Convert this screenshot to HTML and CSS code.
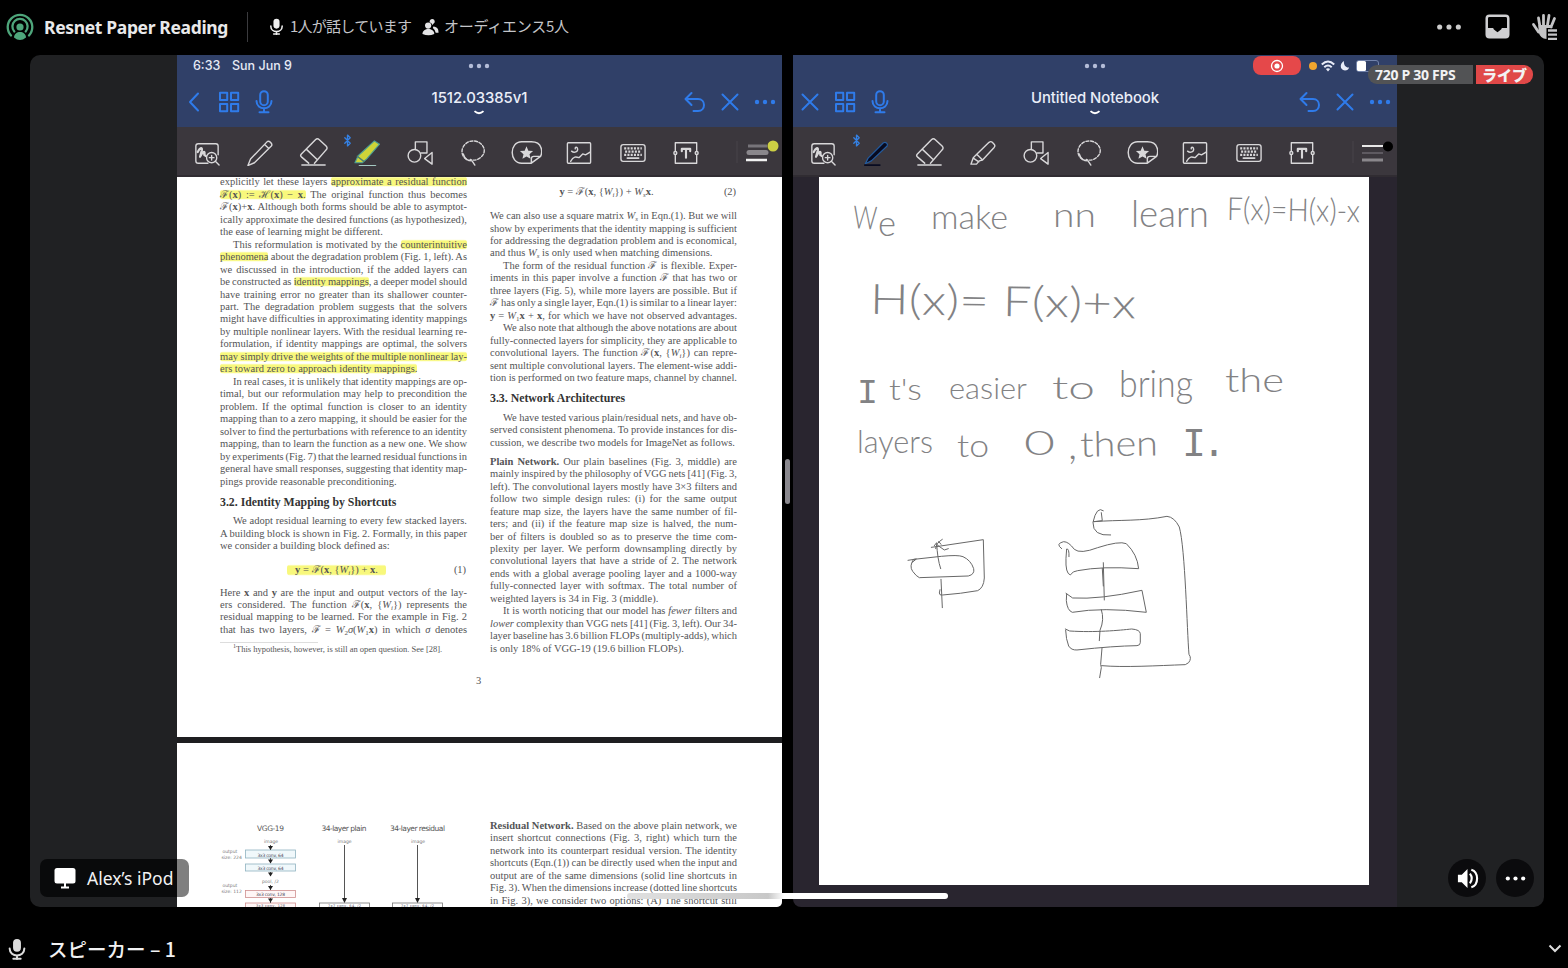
FILE: index.html
```html
<!DOCTYPE html>
<html lang="ja">
<head>
<meta charset="utf-8">
<title>Resnet Paper Reading</title>
<link rel="stylesheet" href="styles.css">
</head>
<body>
<svg class="defs" width="0" height="0">
  <symbol id="mic" viewBox="0 0 24 24"><rect x="7.7" y="1" width="8.6" height="14" rx="4.3" fill="currentColor"/><path d="M4 11.5c0 10 16 10 16 0M12 19v4M8 22.6h8" fill="none" stroke="currentColor" stroke-width="2.2" stroke-linecap="round"/></symbol>
  <symbol id="micline" viewBox="0 0 24 24"><rect x="8.2" y="1.2" width="7.6" height="14" rx="3.8"/><path d="M4.5 11c0 9.600 15 9.600 15 0M12 18.300v4M7.500 22.300h9"/></symbol>
  <symbol id="grid" viewBox="0 0 24 24"><path d="M3 2.800h7.200v7.200H3zM14 2.800h7.200v7.200H14zM3 14h7.200v7.200H3zM14 14h7.200v7.200H14z"/></symbol>
  <symbol id="cross" viewBox="0 0 24 24"><path d="M4.500 4.500l15 15M19.500 4.500l-15 15"/></symbol>
  <symbol id="back" viewBox="0 0 24 24"><path d="M16 3.500L8 12l8 8.500"/></symbol>
  <symbol id="undo" viewBox="0 0 24 24"><path d="M8.500 3L2.500 9l6 6M2.500 9h12.500c8 0 8 12 0 12h-4.500"/></symbol>
  <symbol id="dots" viewBox="0 0 24 24"><g fill="currentColor" stroke="none"><circle cx="4" cy="12" r="2.200"/><circle cx="12" cy="12" r="2.200"/><circle cx="20" cy="12" r="2.200"/></g></symbol>
  <symbol id="zoomnote" viewBox="0 0 28 28"><path d="M15 25H4.500Q2 25 2 22.500v-16Q2 4 4.500 4h19Q26 4 26 6.500V16"/><path d="M4 13c2-4 5-6 4.500-2L6.500 18c3-6 6-7 4.500-2l1.500 1" stroke-width="2.400"/><circle cx="19" cy="19" r="5.500"/><path d="M23 23l4 4M16.500 19h5M19 16.500v5"/></symbol>
  <symbol id="pen" viewBox="0 0 28 28"><path d="M1 27.500l2.800-7L21.500 2c2-2 6.700 2 4.700 4.500L8 24.500zM19 4.800l4.500 4.400"/></symbol>
  <symbol id="penfill" viewBox="0 0 28 28"><path d="M2.500 25.500l3-6L22 3c2.500-1.500 5.200 1 4 3.500L9 22.500z" fill="#080b20" stroke="#245b9e" stroke-width="1.300"/><path d="M2 27h16" stroke="#080b20" stroke-width="2"/></symbol>
  <symbol id="eraser" viewBox="0 0 32 32"><path d="M11 27L3.500 20.500Q2 19 3.500 17.500L18 2.800q2-1.800 4 0l7 6.500q2 2 0 4L17 27M8.500 12.500L20 23.500M4 29h24"/></symbol>
  <symbol id="marker" viewBox="0 0 28 28"><path d="M1 26l2.500-7L7 15.500 20.500 2.500q2-1.500 3.500 0l2 2q1.500 1.500 0 3.500L13.500 21.500 10 22.500 7 26zM7.500 15.500l5.500 5.500M3.500 19.500l6 4"/></symbol>
  <symbol id="markerfill" viewBox="0 0 28 28"><path d="M1 24.500L4.500 17 22 1l5.500 3.500L14 20l-5 4.500z" fill="#cdd438" stroke="#4c9e94" stroke-width="1.200"/><path d="M3.500 17.500l7 5.500" stroke="#4a7f74"/><path d="M6 27.800h17" stroke="#a5c9c2" stroke-width="2"/></symbol>
  <symbol id="shapes" viewBox="0 0 28 28"><path d="M9 10V2h12.500v12H15M19 20l8-6.500V26z"/><circle cx="8" cy="17" r="6.800"/></symbol>
  <symbol id="lasso" viewBox="0 0 28 28"><path d="M7 21C-3 14 4 1 14 1s17 11 8 18q-5 4-11 2" stroke-dasharray="3.200 1.800"/><path d="M3.500 15c1.500 5 5 7.500 9.500 7.500l3 4.500"/></symbol>
  <symbol id="sticker" viewBox="0 0 32 28"><path d="M21 25H11C-2 25-2 3 11 3h10c12 0 11.500 11 9.500 15zM21 25v-4.500q0-2.500 2.500-2.500H30"/><path d="M16 7.500l1.900 4.600 4.900.4-3.700 3.200 1.100 4.800-4.200-2.500-4.200 2.500 1.100-4.800-3.700-3.200 4.900-.4z" fill="currentColor" stroke="none"/></symbol>
  <symbol id="image" viewBox="0 0 28 28"><rect x="1.500" y="3" width="25" height="22" rx="1"/><path d="M5 23c3-6 6-5 9-4l4-4 3 1 5-3M6 12c3 2.500 7 .500 6.500-2.500C12 7 9.500 7.500 10 9.500"/></symbol>
  <symbol id="keyboard" viewBox="0 0 28 28"><rect x="1" y="5" width="26" height="18" rx="2.500"/><path d="M4.500 9h19M5.500 12.500h17M4.500 16h19" stroke-width="2.200" stroke-linecap="butt" stroke-dasharray="2.200 1.300"/><path d="M8 19.500h12" stroke-width="2"/></symbol>
  <symbol id="textbox" viewBox="0 0 28 28"><rect x="2.500" y="3" width="23" height="22"/><path d="M9.500 12V9.500h9V12M14 9.500v9.500" stroke-width="2.300"/><circle cx="2.500" cy="14" r="1.600" fill="#3b373d"/><circle cx="25.500" cy="14" r="1.600" fill="#3b373d"/></symbol>
  <symbol id="bt" viewBox="0 0 10 14"><path d="M2 4l6 6-3 3V1l3 3-6 6"/></symbol>
</svg>

<header class="topbar">
  <svg class="stage-icon" viewBox="0 0 28 28"><g fill="none" stroke="#4ea67b" stroke-width="2.300" stroke-linecap="round"><path d="M5 22.500a12.300 12.300 0 1 1 18 0"/><path d="M8.300 18.500a7.600 7.600 0 1 1 11.400 0"/></g><circle cx="14" cy="14" r="3.600" fill="#4ea67b"/><path d="M8 24.500c0-7.500 12-7.500 12 0q-6 5-12 0z" fill="#4ea67b"/></svg>
  <h1 class="channel">Resnet Paper Reading</h1>
  <span class="rule"></span>
  <svg class="mini-mic"><use href="#mic"/></svg>
  <span class="count speakers">1人が話しています</span>
  <svg class="people" viewBox="0 0 18 20"><g fill="#e4e4e6"><circle cx="6.500" cy="9" r="3.300"/><path d="M.5 18c0-7 12.500-7 12.500 0q-6 2.500-12.500 0z"/><path d="M8 5.500c0-5 6-4.500 5.500 0l-2.500 3q-.5-2.500-3-3zM12 10c4.500.5 5.500 3 5.500 6.500h-3q-.5-3-3-5z"/></g></svg>
  <span class="count audience">オーディエンス5人</span>
  <div class="top-actions">
    <svg class="more"><use href="#dots"/></svg>
    <svg class="inbox" viewBox="0 0 26 26"><rect x="1.800" y="1.800" width="22.400" height="22.400" rx="2.800" fill="none" stroke="#cfcfd1" stroke-width="2.600"/><path d="M2 14.500h6.500c.5 2 2 2 4.500 4.500 2.500-2.500 4-2.500 4.500-4.500H24V24H2z" fill="#cfcfd1"/></svg>
    <svg class="hand" viewBox="0 0 28 28"><path d="M9 14L7.500 5M12.500 12V2.500M16.500 12l1.500-9.500M20 14l3.500-8.500M7.500 19L2.500 11.500" stroke="#c4c4c6" stroke-width="2.800" stroke-linecap="round"/><path d="M7.500 12h13l1 3h-6v11q-6 0-8-7z" fill="#c4c4c6"/><path d="M17 17.500h9M17 21.700h9M17 25.900h9" stroke="#c4c4c6" stroke-width="2.300"/></svg>
  </div>
</header>

<main class="stream">
  <div class="ipad">
    <section class="pane">
      <header class="nav">
        <div class="status"><span class="time">6:33</span><span>Sun Jun 9</span></div>
        <svg class="grab"><use href="#dots"/></svg>
        <div class="nav-row">
          <div class="nav-side"><svg><use href="#back"/></svg><svg><use href="#grid"/></svg><svg><use href="#micline"/></svg></div>
          <div class="doc-title">1512.03385v1<svg class="chev" viewBox="0 0 12 5"><path d="M1.500 1.200q4.500 4.200 9 0"/></svg></div>
          <div class="nav-side right"><svg><use href="#undo"/></svg><svg><use href="#cross"/></svg><svg><use href="#dots"/></svg></div>
        </div>
      </header>
      <div class="tools">
        <svg><use href="#zoomnote"/></svg><svg><use href="#pen"/></svg><svg class="big"><use href="#eraser"/></svg>
        <span class="active"><svg class="btooth"><use href="#bt"/></svg><svg><use href="#markerfill"/></svg></span>
        <svg><use href="#shapes"/></svg><svg><use href="#lasso"/></svg><svg class="big"><use href="#sticker"/></svg><svg><use href="#image"/></svg><svg><use href="#keyboard"/></svg><svg><use href="#textbox"/></svg>
        <svg class="stroke-size" viewBox="0 0 40 40"><path d="M2 8v22" stroke="#49454b" stroke-width="1"/><path d="M13 13h19" stroke="#77747a" stroke-width="3"/><path d="M14 19.500h17" stroke="#8a878c" stroke-width="5" stroke-linecap="round"/><path d="M11 27h21" stroke="#f2f2f2" stroke-width="2.600"/><circle cx="38" cy="13" r="5.500" fill="#cdd044" stroke="none"/></svg>
      </div>
      <div class="paper">
        <article class="page one">
          <div class="col left">
            <p class="l">explicitly let these layers <mark>approximate a residual function</mark></p>
            <p class="l"><mark>ℱ(<b>x</b>) := ℋ(<b>x</b>) − <b>x</b>.</mark> The original function thus becomes</p>
            <p class="l">ℱ(<b>x</b>)+<b>x</b>. Although both forms should be able to asymptot-</p>
            <p class="l">ically approximate the desired functions (as hypothesized),</p>
            <p class="l end">the ease of learning might be different.</p>
            <p class="l in">This reformulation is motivated by the <mark>counterintuitive</mark></p>
            <p class="l"><mark>phenomena</mark> about the degradation problem (Fig. 1, left). As</p>
            <p class="l">we discussed in the introduction, if the added layers can</p>
            <p class="l">be constructed as <mark>identity mappings</mark>, a deeper model should</p>
            <p class="l">have training error no greater than its shallower counter-</p>
            <p class="l">part. The degradation problem suggests that the solvers</p>
            <p class="l">might have difficulties in approximating identity mappings</p>
            <p class="l">by multiple nonlinear layers. With the residual learning re-</p>
            <p class="l">formulation, if identity mappings are optimal, the solvers</p>
            <p class="l"><mark>may simply drive the weights of the multiple nonlinear lay-</mark></p>
            <p class="l end"><mark>ers toward zero to approach identity mappings.</mark></p>
            <p class="l in">In real cases, it is unlikely that identity mappings are op-</p>
            <p class="l">timal, but our reformulation may help to precondition the</p>
            <p class="l">problem. If the optimal function is closer to an identity</p>
            <p class="l">mapping than to a zero mapping, it should be easier for the</p>
            <p class="l">solver to find the perturbations with reference to an identity</p>
            <p class="l">mapping, than to learn the function as a new one. We show</p>
            <p class="l">by experiments (Fig. 7) that the learned residual functions in</p>
            <p class="l">general have small responses, suggesting that identity map-</p>
            <p class="l end">pings provide reasonable preconditioning.</p>
            <h2>3.2. Identity Mapping by Shortcuts</h2>
            <p class="l in">We adopt residual learning to every few stacked layers.</p>
            <p class="l">A building block is shown in Fig. 2. Formally, in this paper</p>
            <p class="l end">we consider a building block defined as:</p>
            <div class="eq"><mark><b>y</b> = ℱ(<b>x</b>, {<i>W<sub>i</sub></i>}) + <b>x</b>.</mark><span>(1)</span></div>
            <p class="l">Here <b>x</b> and <b>y</b> are the input and output vectors of the lay-</p>
            <p class="l">ers considered. The function ℱ(<b>x</b>, {<i>W<sub>i</sub></i>}) represents the</p>
            <p class="l">residual mapping to be learned. For the example in Fig. 2</p>
            <p class="l">that has two layers, ℱ = <i>W</i><sub>2</sub><i>σ</i>(<i>W</i><sub>1</sub><b>x</b>) in which <i>σ</i> denotes</p>
            <p class="footnote"><sup>1</sup>This hypothesis, however, is still an open question. See [28].</p>
          </div>
          <div class="col right">
            <div class="eq first"><span><b>y</b> = ℱ(<b>x</b>, {<i>W<sub>i</sub></i>}) + <i>W<sub>s</sub></i><b>x</b>.</span><span>(2)</span></div>
            <p class="l">We can also use a square matrix <i>W<sub>s</sub></i> in Eqn.(1). But we will</p>
            <p class="l">show by experiments that the identity mapping is sufficient</p>
            <p class="l">for addressing the degradation problem and is economical,</p>
            <p class="l end">and thus <i>W<sub>s</sub></i> is only used when matching dimensions.</p>
            <p class="l in">The form of the residual function ℱ is flexible. Exper-</p>
            <p class="l">iments in this paper involve a function ℱ that has two or</p>
            <p class="l">three layers (Fig. 5), while more layers are possible. But if</p>
            <p class="l">ℱ has only a single layer, Eqn.(1) is similar to a linear layer:</p>
            <p class="l"><b>y</b> = <i>W</i><sub>1</sub><b>x</b> + <b>x</b>, for which we have not observed advantages.</p>
            <p class="l in">We also note that although the above notations are about</p>
            <p class="l">fully-connected layers for simplicity, they are applicable to</p>
            <p class="l">convolutional layers. The function ℱ(<b>x</b>, {<i>W<sub>i</sub></i>}) can repre-</p>
            <p class="l">sent multiple convolutional layers. The element-wise addi-</p>
            <p class="l">tion is performed on two feature maps, channel by channel.</p>
            <h2>3.3. Network Architectures</h2>
            <p class="l in">We have tested various plain/residual nets, and have ob-</p>
            <p class="l">served consistent phenomena. To provide instances for dis-</p>
            <p class="l end">cussion, we describe two models for ImageNet as follows.</p>
            <p class="l top"><b>Plain Network.</b> Our plain baselines (Fig. 3, middle) are</p>
            <p class="l">mainly inspired by the philosophy of VGG nets [41] (Fig. 3,</p>
            <p class="l">left). The convolutional layers mostly have 3×3 filters and</p>
            <p class="l">follow two simple design rules: (i) for the same output</p>
            <p class="l">feature map size, the layers have the same number of fil-</p>
            <p class="l">ters; and (ii) if the feature map size is halved, the num-</p>
            <p class="l">ber of filters is doubled so as to preserve the time com-</p>
            <p class="l">plexity per layer. We perform downsampling directly by</p>
            <p class="l">convolutional layers that have a stride of 2. The network</p>
            <p class="l">ends with a global average pooling layer and a 1000-way</p>
            <p class="l">fully-connected layer with softmax. The total number of</p>
            <p class="l end">weighted layers is 34 in Fig. 3 (middle).</p>
            <p class="l in">It is worth noticing that our model has <i>fewer</i> filters and</p>
            <p class="l"><i>lower</i> complexity than VGG nets [41] (Fig. 3, left). Our 34-</p>
            <p class="l">layer baseline has 3.6 billion FLOPs (multiply-adds), which</p>
            <p class="l end">is only 18% of VGG-19 (19.6 billion FLOPs).</p>
          </div>
          <div class="folio">3</div>
        </article>
        <article class="page two">
          <svg class="figure" viewBox="177 743 300 164">
            <g class="cap"><text x="257" y="831" textLength="27">VGG-19</text><text x="321.500" y="831" textLength="45">34-layer plain</text><text x="390" y="831" textLength="55">34-layer residual</text></g>
            <g class="tiny"><text x="264" y="843">image</text><text x="337.500" y="843">image</text><text x="411" y="843">image</text><text x="222.500" y="853">output</text><text x="221.500" y="859">size: 224</text><text x="222.500" y="887">output</text><text x="221.500" y="893">size: 112</text><text x="262" y="883">pool, /2</text></g>
            <g fill="#f0f8fb" stroke="#8fb2c0" stroke-width=".8"><rect x="245.500" y="850" width="50" height="8"/><rect x="245.500" y="864" width="50" height="7"/></g>
            <g fill="#fff6f6" stroke="#cf8f8f" stroke-width=".8"><rect x="245.500" y="890.500" width="50" height="7"/><rect x="245.500" y="903" width="50" height="7"/></g>
            <g fill="none" stroke="#777" stroke-width=".8"><rect x="319.500" y="903" width="50" height="7"/><rect x="392.500" y="903" width="50" height="7"/></g>
            <g class="tiny dark"><text x="257.500" y="856.500" textLength="26">3x3 conv, 64</text><text x="257.500" y="870" textLength="26">3x3 conv, 64</text><text x="256" y="896.300" textLength="29">3x3 conv, 128</text></g>
            <g class="tiny dark edge"><text x="256" y="906.500" textLength="29">3x3 conv, 128</text><text x="328" y="906.500" textLength="33">7x7 conv, 64, /2</text><text x="401" y="906.500" textLength="33">7x7 conv, 64, /2</text></g>
            <path d="M344.500 845v57M417.500 845v57M270.500 845v5M270.500 858v5M270.500 872v4M270.500 885v5M270.500 898v5" stroke="#555"/>
            <path d="M342 898h5l-2.500 5zM415 898h5l-2.500 5zM268 846h5l-2.500 4zM268 859.500h5l-2.500 4zM268 872.500h5l-2.500 4zM268 886h5l-2.500 4zM268 898.500h5l-2.500 4z" fill="#222"/>
          </svg>
          <div class="col residual">
            <p class="l"><b>Residual Network.</b> Based on the above plain network, we</p>
            <p class="l">insert shortcut connections (Fig. 3, right) which turn the</p>
            <p class="l">network into its counterpart residual version. The identity</p>
            <p class="l">shortcuts (Eqn.(1)) can be directly used when the input and</p>
            <p class="l">output are of the same dimensions (solid line shortcuts in</p>
            <p class="l">Fig. 3). When the dimensions increase (dotted line shortcuts</p>
            <p class="l">in Fig. 3), we consider two options: (A) The shortcut still</p>
          </div>
        </article>
      </div>
    </section>
    <div class="split"><span></span></div>
    <section class="pane notes">
      <header class="nav">
        <div class="status end-status">
          <span class="rec"><svg viewBox="0 0 14 14"><circle cx="7" cy="7" r="5.500" fill="none" stroke="#fff" stroke-width="1.300"/><circle cx="7" cy="7" r="2.600" fill="#fff"/></svg></span>
          <i class="orange"></i>
          <svg class="wifi" viewBox="0 0 14 12"><g fill="none" stroke="#e8ecf8" stroke-width="2"><path d="M.8 4.500q6.200-6 12.400 0M3.300 7.300q3.700-3.600 7.400 0"/></g><path d="M4.900 9L7 11.500 9.100 9Q7 7.300 4.900 9z" fill="#e8ecf8"/></svg>
          <svg class="moon" viewBox="0 0 10 12"><path d="M4 1C-1 3-1 11.500 5 11.500q3.500 0 4.500-3.300C6 9 3 5 4 1z" fill="#e8ecf8"/></svg>
          <svg class="battery" viewBox="0 0 26 12"><rect x=".5" y=".5" width="22" height="11" rx="2.500" fill="none" stroke="#7283ab"/><rect x="1" y="1" width="9" height="10" rx="1.500" fill="#fff"/></svg>
        </div>
        <svg class="grab"><use href="#dots"/></svg>
        <div class="nav-row">
          <div class="nav-side"><svg><use href="#cross"/></svg><svg><use href="#grid"/></svg><svg><use href="#micline"/></svg></div>
          <div class="doc-title">Untitled Notebook<svg class="chev" viewBox="0 0 12 5"><path d="M1.500 1.200q4.500 4.200 9 0"/></svg></div>
          <div class="nav-side right"><svg><use href="#undo"/></svg><svg><use href="#cross"/></svg><svg><use href="#dots"/></svg></div>
        </div>
      </header>
      <div class="tools">
        <svg><use href="#zoomnote"/></svg>
        <span class="active"><svg class="btooth"><use href="#bt"/></svg><svg><use href="#penfill"/></svg></span>
        <svg class="big"><use href="#eraser"/></svg><svg><use href="#marker"/></svg><svg><use href="#shapes"/></svg><svg><use href="#lasso"/></svg><svg class="big"><use href="#sticker"/></svg><svg><use href="#image"/></svg><svg><use href="#keyboard"/></svg><svg><use href="#textbox"/></svg>
        <svg class="stroke-size" viewBox="0 0 40 40"><path d="M2 8v22" stroke="#49454b" stroke-width="1"/><path d="M11 13h21" stroke="#e8e8e8" stroke-width="2"/><path d="M11 20h21" stroke="#5e5a61" stroke-width="2"/><path d="M11 27h21" stroke="#8a878c" stroke-width="3"/><circle cx="37" cy="13.500" r="5" fill="#000" stroke="none"/></svg>
      </div>
      <div class="desk">
        <svg class="sheet" viewBox="819 177 550 708">
          <g class="ink">
            <text x="853" y="229" font-size="32" textLength="24" lengthAdjust="spacingAndGlyphs" transform="rotate(3 865 220)">W</text>
            <text x="878" y="236" font-size="36" textLength="18" lengthAdjust="spacingAndGlyphs">e</text>
            <text x="931" y="229" font-size="33" textLength="77" lengthAdjust="spacingAndGlyphs">make</text>
            <text x="1053" y="227" font-size="34" textLength="43" lengthAdjust="spacingAndGlyphs">nn</text>
            <text x="1131" y="227" font-size="37" textLength="78" lengthAdjust="spacingAndGlyphs">learn</text>
            <text x="1227" y="221" font-size="32" textLength="133" lengthAdjust="spacingAndGlyphs" transform="rotate(1 1290 210)">F(x)=H(x)-x</text>
            <text x="870" y="316" font-size="42" textLength="266" lengthAdjust="spacingAndGlyphs" transform="rotate(1 1000 300)">H(x)= F(x)+x</text>
            <text x="857" y="403" font-size="35" class="slab">I</text>
            <text x="889" y="400" font-size="30" textLength="33" lengthAdjust="spacingAndGlyphs">t's</text>
            <text x="949" y="399" font-size="30" textLength="78" lengthAdjust="spacingAndGlyphs">easier</text>
            <text x="1052" y="399" font-size="32" textLength="43" lengthAdjust="spacingAndGlyphs">to</text>
            <text x="1119" y="397" font-size="37" textLength="74" lengthAdjust="spacingAndGlyphs">bring</text>
            <text x="1225" y="392" font-size="34" textLength="59" lengthAdjust="spacingAndGlyphs">the</text>
            <text x="857" y="453" font-size="32" textLength="76" lengthAdjust="spacingAndGlyphs">layers</text>
            <text x="957" y="457" font-size="31" textLength="32" lengthAdjust="spacingAndGlyphs">to</text>
            <text x="1024" y="455" font-size="34" textLength="31" lengthAdjust="spacingAndGlyphs">0</text>
            <text x="1068" y="459" font-size="42">,</text>
            <text x="1080" y="456" font-size="35" textLength="78" lengthAdjust="spacingAndGlyphs" transform="rotate(-1 1120 445)">then</text>
            <text x="1182" y="456" font-size="40" textLength="40" lengthAdjust="spacingAndGlyphs" class="slab" letter-spacing="-4">I.</text>
          </g>
          <g transform="translate(890 490) scale(.3333)" class="drawing">
            <path d="M54 211l25-4-12 10M70 209q-13 20-2 35t20 19l147-5q20-5 16-22-8-25-32-36-15-6-65-1L72 208M124 172l28-4L280 149l3 115q-2 30-20 38-50 9-105 13-10 2-10-6l2-10M157 148q-20 12-20 28M143 166l20 14 12-4M152 236q-10-30-12-78l-7 9M153 268l4 85M146 154l7 9"/>
            <path d="M640 62q-20-15-31 35-1 42 53 38M611 95l26-3-3-24M611 95c80-6 145-1 220-16q22 2 37 32c18 65 23 310 29 382q9 12-1 25l-10 6c-85 3-185 9-251 3"/>
            <path d="M515 176q-20-15 6-21 15 0 32 23 18 15 70-5 65-21 86-12 33 32 37 75-110-8-183 6-15 1-22 13-15-5-13-50l2-28q8-2 7 23M640 218l3 112M637 235l3 53"/>
            <path d="M528 310l20 14q80 5 208-23l13 66q-130-16-222 0-15-5-18-35l1-20M634 359q10 30-4 62l-2 31M526 417l13 6c75 5 150-2 186-6q25 2 26 14v27q0 8-10 9-70 1-180 13-17 1-25-12-8-20-9-47M636 475l-4 48 2 10-5 30"/>
          </g>
        </svg>
      </div>
    </section>
    <div class="home-bar"></div>
  </div>
  <div class="quality"><span>720 P 30 FPS</span><b>ライブ</b></div>
  <div class="owner"><svg viewBox="0 0 22 22"><rect x=".5" y="1" width="21" height="15.500" rx="2.500" fill="#fff"/><path d="M11 16v4M7 20.500h8" stroke="#fff" stroke-width="2"/></svg>Alex’s iPod</div>
  <div class="round-actions">
    <button><svg viewBox="0 0 24 24"><path d="M2 8h4l6-6v20l-6-6H2z" fill="#fff"/><path d="M14.500 7q4 5 0 10M16 2.800c8 2.500 8 15.900 0 18.400" fill="none" stroke="#fff" stroke-width="2.200"/></svg></button>
    <button><svg><use href="#dots"/></svg></button>
  </div>
</main>

<footer class="bottombar">
  <svg class="foot-mic"><use href="#mic"/></svg>
  <span class="speaker-title">スピーカー – 1</span>
  <svg class="expand" viewBox="0 0 14 9"><path d="M1.500 1.500L7 7l5.500-5.500" fill="none" stroke="#ddd" stroke-width="2"/></svg>
</footer>
</body>
</html>
```
FILE: styles.css
```css
* { box-sizing: border-box; }
body { margin: 0; width: 1568px; height: 968px; background: #000; overflow: hidden; display: flex; flex-direction: column; font-family: "Noto Sans", "Noto Sans CJK JP", sans-serif; color: #f2f2f3; }
svg { display: block; flex: none; }
.defs { position: absolute; }

.topbar { height: 55px; flex: none; display: flex; align-items: center; padding: 0 9px 2px 6px; }
.stage-icon { width: 28px; height: 28px; }
.channel { margin: 0 0 0 10px; width: 184px; font-size: 17.5px; font-weight: 700; letter-spacing: -.35px; white-space: nowrap; color: #e9e9ea; }
.rule { width: 1px; height: 30px; background: #3b3b3e; margin: 0 22px 0 19px; }
.mini-mic { width: 17px; height: 17px; margin-left: -2px; color: #eee; }
.count { font-family: "Noto Sans CJK JP", sans-serif; font-size: 15px; line-height: 20px; padding-bottom: 1px; color: #c3c4c8; white-space: nowrap; letter-spacing: -.75px; }
.speakers { margin-left: 5px; width: 123px; }
.people { width: 17px; height: 19px; margin-left: 9px; }
.audience { margin-left: 5px; letter-spacing: -.25px; }
.top-actions { margin-left: auto; display: flex; align-items: center; gap: 22px; }
.more { width: 28px; height: 28px; color: #ccc; }
.inbox { width: 25px; height: 25px; margin-right: -1px; }
.hand { width: 28px; height: 28px; }

.stream { position: relative; margin: 0 24px 0 30px; height: 852px; flex: none; background: #202123; border-radius: 10px; overflow: hidden; padding-left: 147px; }
.ipad { position: relative; width: 1220px; height: 852px; background: #000; display: flex; }
.pane { width: 605px; display: flex; flex-direction: column; overflow: hidden; border-bottom-right-radius: 5px; }
.notes { width: 604px; background: #29252f; border-radius: 0 0 0 8px; }
.split { width: 11px; display: flex; align-items: center; justify-content: center; }
.split span { width: 5px; height: 45px; border-radius: 3px; background: #8a888e; }

.nav { position: relative; height: 72px; flex: none; background: #304068; font-family: Inter, sans-serif; }
.status { height: 21px; display: flex; align-items: center; padding-left: 16px; gap: 11px; font-size: 12.5px; font-weight: 500; letter-spacing: 0; color: #e6eaf5; }
.time { width: 28px; white-space: nowrap; }
.end-status { padding: 0 9px 0 460px; gap: 0; }
.rec { width: 48px; height: 19px; border-radius: 8px; background: #e5484a; display: flex; align-items: center; justify-content: center; }
.rec svg { width: 14px; height: 14px; }
.orange { width: 8px; height: 8px; border-radius: 50%; background: #f0a52e; margin: 0 4px 0 8px; }
.wifi { width: 14px; height: 12px; }
.moon { width: 10px; height: 11px; margin: 0 6px 0 5px; }
.battery { width: 26px; height: 12px; }
.grab { position: absolute; left: 290px; top: -1px; width: 24px; height: 24px; color: #b4bdd8; }
.nav-row { display: flex; justify-content: space-between; padding: 0 5px; height: 51px; }
.nav-side { display: flex; gap: 11px; align-items: center; color: #2f7bea; }
.nav-side svg { width: 24px; height: 24px; fill: none; stroke: currentColor; stroke-width: 2; stroke-linecap: round; stroke-linejoin: round; }
.right.nav-side { gap: 11px; }
.doc-title { padding-top: 13px; text-align: center; font-size: 14.9px; line-height: 18px; font-weight: 500; color: #eaeef8; letter-spacing: -.05px; }
.chev { width: 12px; height: 5px; margin: 3px auto 0; fill: none; stroke: #fff; stroke-width: 1.8; }

.tools { height: 50px; flex: none; background: #3b373d; display: grid; grid-template-columns: repeat(10, 53.2px) 40px; padding: 3px 0 0 3.5px; align-items: center; justify-items: center; color: #d8d7d9; border-bottom: 2px solid #302c32; }
.tools svg { width: 26px; height: 26px; fill: none; stroke: currentColor; stroke-width: 1.5; stroke-linejoin: round; stroke-linecap: round; }
.tools svg.big { width: 31px; height: 31px; }
.tools svg.stroke-size { width: 40px; height: 40px; margin-left: 46px; stroke: none; stroke-linecap: butt; overflow: visible; }
.active { position: relative; }
.tools svg.btooth { position: absolute; left: -11px; top: -6px; width: 9px; height: 13px; color: #3481e4; }

.paper { flex: 1; background: #1e1e20; display: flex; flex-direction: column; gap: 6px; overflow: hidden; }
.page { background: #fff; flex: none; overflow: hidden; position: relative; }
.one { height: 560px; display: grid; grid-template-columns: 247px 247px; column-gap: 23px; padding-left: 43px; align-content: start; }
.two { height: 164px; display: flex; }
.col { font-family: "Liberation Serif", "DejaVu Serif", serif; font-size: 10.5px; color: #545456; width: 247px; }
.left { margin-top: -.7px; }
.right.col { margin-top: .7px; }
.l { margin: 0; height: 12.480px; line-height: 12.480px; white-space: nowrap; word-spacing: -.9px; text-align: justify; text-align-last: justify; }
.l.end { text-align-last: left; word-spacing: 0; }
.l.in { text-indent: 13px; }
.l.top { margin-top: 6.500px; }
.col h2 { margin: 7.500px 0 6.700px; font-size: 11.800px; line-height: 13px; color: #333; }
mark { background: linear-gradient(#fff 3%, #f8f87c 18%, #f8f87c 85%, #fff 98%); color: inherit; border-radius: 4px; }
sub { font-size: 7px; line-height: 0; vertical-align: -2px; }
sup { font-size: 6px; line-height: 0; }
.eq { height: 33px; display: grid; grid-template-columns: 1fr 14px; align-items: center; text-align: center; line-height: 12.480px; padding-top: 2px; margin-bottom: .900px; }
.eq mark { justify-self: center; padding: 0 8px; }
.eq.first { height: 31.500px; padding: 0 0 3px; }
.footnote { margin: 6px 0 0; padding: 1px 0 0 13px; font-size: 8.500px; line-height: 12px; white-space: nowrap; background: linear-gradient(#ddd, #ddd) 0 0 / 98px 1px no-repeat; }
.folio { position: absolute; left: 299px; top: 498px; font: 10.500px/12px "Liberation Serif", serif; color: #555; }
.figure { width: 300px; height: 164px; margin-right: 13px; }
.cap { font: 7.500px "DejaVu Sans", sans-serif; fill: #555; }
.tiny { font: 4.500px "DejaVu Sans", sans-serif; fill: #777; }
.dark { fill: #445; }
.edge { font-size: 3.500px; }
.residual { margin-top: 77px; }

.desk { padding-left: 26px; }
.sheet { width: 550px; height: 708px; background: #fff; }
.ink text { font-family: Lato, sans-serif; font-weight: 300; fill: #828284; }
.ink .slab { font-family: "Liberation Mono", monospace; }
.drawing { fill: none; stroke: #666; stroke-width: 3; stroke-linejoin: round; stroke-linecap: round; }
.home-bar { position: absolute; left: 450px; bottom: 8px; width: 321px; height: 6px; border-radius: 3px; background: linear-gradient(90deg, #e0e0e0 0, #c8c8c8 44%, #fff 49%); }

.quality { position: absolute; right: 11px; top: 10px; height: 19px; display: flex; gap: 3px; font-size: 14.500px; line-height: 19px; font-weight: 700; }
.quality span { width: 105px; padding-left: 7px; border-radius: 9px 0 0 9px; background: #525355; letter-spacing: -.15px; white-space: nowrap; font-family: "Open Sans", sans-serif; font-size: 14px; letter-spacing: -.3px; }
.quality b { width: 57px; text-align: center; background: #e04848; border-radius: 0 9px 9px 0; font-family: "Noto Sans CJK JP", sans-serif; font-size: 15px; }
.owner { position: absolute; left: 10px; bottom: 10px; width: 149px; height: 38px; border-radius: 7px; background: linear-gradient(90deg, #090a0b 137px, rgba(0, 0, 0, .5) 137px); display: flex; align-items: center; gap: 11px; padding-left: 14px; font-size: 17.5px; letter-spacing: 0; white-space: nowrap; }
.owner svg { width: 22px; height: 22px; }
.round-actions { position: absolute; right: 10px; bottom: 10px; display: flex; gap: 10px; }
.round-actions button { width: 38px; height: 38px; border: 0; padding: 0; border-radius: 50%; background: #0b0b0d; color: #fff; display: flex; align-items: center; justify-content: center; }
.round-actions svg { width: 23px; height: 23px; }

.bottombar { flex: 1; display: flex; align-items: center; padding: 22px 6px 0; }
.foot-mic { width: 22px; height: 22px; color: #ddd; }
.speaker-title { margin-left: 20px; font-family: "Noto Sans CJK JP", sans-serif; font-size: 19.5px; line-height: 24px; font-weight: 500; white-space: nowrap; }
.expand { width: 14px; height: 9px; margin-left: auto; }
```
